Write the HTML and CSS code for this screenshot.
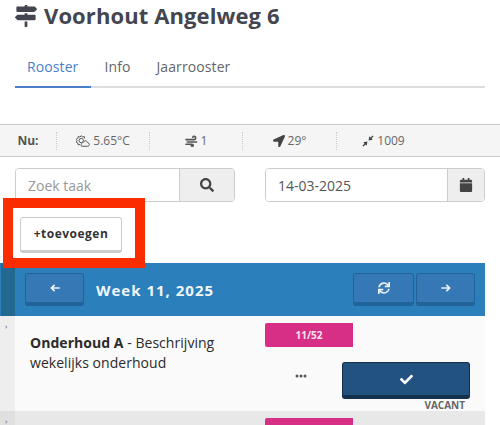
FILE: index.html
```html
<!DOCTYPE html>
<html lang="en">

<head>
    <meta charset="UTF-8">
    <title>Voorhout Angelweg 6</title>
    <link rel="stylesheet" href="styles.css">
</head>

<body>
    <h1 class="title">
        <svg class="title-icon" viewBox="0 0 512 512"><path d="M507.31 84.69L464 41.37c-6-6-14.14-9.37-22.63-9.37H288V16c0-8.84-7.16-16-16-16h-32c-8.84 0-16 7.16-16 16v16H56c-13.25 0-24 10.75-24 24v80c0 13.25 10.75 24 24 24h385.37c8.49 0 16.62-3.37 22.63-9.37l43.31-43.31c6.25-6.26 6.25-16.38 0-22.63zM224 496c0 8.84 7.16 16 16 16h32c8.84 0 16-7.16 16-16V384h-64v112zm232-272H288v-32h-64v32H70.63c-8.49 0-16.62 3.37-22.63 9.37L4.69 276.69c-6.25 6.25-6.25 16.38 0 22.63L48 342.63c6 6 14.14 9.37 22.63 9.37H456c13.25 0 24-10.75 24-24v-80c0-13.25-10.75-24-24-24z"/></svg>
        Voorhout Angelweg 6
    </h1>

    <div class="tabs">
        <a class="tab active">Rooster</a>
        <a class="tab">Info</a>
        <a class="tab">Jaarrooster</a>
    </div>

    <!-- Weather -->
    <div class="weather">
        <div class="weather-item weather-label">Nu:</div>
        <div class="weather-item weather-temp">
            <svg class="w-icon" viewBox="0 0 16 14" fill="none" stroke="#555" stroke-width="1.1"><circle cx="6" cy="6.500" r="2.500"/><path d="M6 .8l1.400 1.700 2.100-.6.400 2.200M6 .8L4.600 2.500 2.500 1.900l-.4 2.200-2 1 1.200 1.600L.1 8.300l2 1 .4 2.200 2.100-.6"/><path d="M6.500 13h6.500c3 0 3-3.800.4-4C13 6.500 9.500 5.800 8.500 8.500 6 8.500 5 13 6.500 13z" fill="#f5f5f5"/></svg>
            5.65°C
        </div>
        <div class="weather-item weather-wind">
            <svg class="w-icon wind-icon" viewBox="0 0 14 12" fill="none" stroke="#555" stroke-width="1.700" stroke-linecap="round"><path d="M1 4.500h8.500c2.700 0 2.500-3.500.3-3.500-.9 0-1.300.5-1.500 1"/><path d="M2.500 7h10"/><path d="M1 9.500h6.500c1.800 0 1.800 2 .2 2-.5 0-.8-.2-1-.6"/></svg>
            1
        </div>
        <div class="weather-item weather-dir">
            <svg class="w-icon dir-icon" viewBox="0 0 512 512" fill="#444"><path d="M444.52 3.52L28.74 195.42c-47.97 22.39-31.98 92.75 19.19 92.75h175.91v175.91c0 51.17 70.36 67.17 92.75 19.19l191.9-415.78c15.99-38.39-25.59-79.97-63.97-63.97z"/></svg>
            29°
        </div>
        <div class="weather-item weather-press">
            <svg class="w-icon press-icon" viewBox="0 0 14 14" fill="#444"><path d="M7.700 6.300L8.500 1.500l1.400 1.400 2.500-2.400 1.100 1.100-2.400 2.500 1.400 1.400z"/><path d="M6.300 7.700L5.500 12.500l-1.400-1.400-2.500 2.400-1.100-1.100 2.400-2.500L1.500 8.500z"/></svg>
            1009
        </div>
    </div>

    <!-- Search + date -->
    <div class="filters">
        <div class="input-group">
            <input class="field" type="text" placeholder="Zoek taak">
            <span class="addon addon-search"><svg class="addon-icon" viewBox="0 0 512 512"><path d="M505 442.7L405.3 343c-4.500-4.500-10.600-7-17-7H372c27.600-35.300 44-79.700 44-128C416 93.100 322.900 0 208 0S0 93.100 0 208s93.100 208 208 208c48.300 0 92.700-16.400 128-44v16.300c0 6.400 2.500 12.500 7 17l99.700 99.700c9.400 9.400 24.600 9.400 33.900 0l28.300-28.300c9.400-9.400 9.400-24.600.1-34zM208 336c-70.700 0-128-57.200-128-128 0-70.700 57.200-128 128-128 70.700 0 128 57.200 128 128 0 70.700-57.200 128-128 128z"/></svg></span>
        </div>
        <div class="input-group">
            <input class="field field-date" type="text" value="14-03-2025">
            <span class="addon addon-date"><svg class="addon-icon" viewBox="0 0 448 512"><path d="M12 192h424c6.600 0 12 5.400 12 12v260c0 26.500-21.500 48-48 48H48c-26.500 0-48-21.500-48-48V204c0-6.600 5.400-12 12-12zm436-44v-36c0-26.500-21.500-48-48-48h-48V12c0-6.600-5.400-12-12-12h-40c-6.600 0-12 5.400-12 12v52H160V12c0-6.600-5.400-12-12-12h-40c-6.600 0-12 5.400-12 12v52H48C21.500 64 0 85.500 0 112v36c0 6.600 5.400 12 12 12h424c6.600 0 12-5.400 12-12z"/></svg></span>
        </div>
    </div>

    <div class="add-row">
        <button class="add-btn">+toevoegen</button>
        <div class="highlight"></div>
    </div>

    <!-- Week header -->
    <div class="week-bar">
        <div class="week-stripe"></div>
        <button class="nav-btn nav-prev"><svg class="nav-icon" viewBox="0 0 14 12"><path d="M6.500 1.500L2 6l4.500 4.500M3 6h10.500"/></svg></button>
        <span class="week-title">Week 11, 2025</span>
        <div class="week-actions">
            <button class="nav-btn nav-sync"><svg class="nav-icon sync-icon" viewBox="0 0 512 512"><path d="M440.650 12.570l4 82.770A247.160 247.160 0 0 0 255.830 8C134.730 8 33.910 94.920 12.290 209.820A12 12 0 0 0 24.090 224h49.050a12 12 0 0 0 11.670-9.260 175.910 175.910 0 0 1 317-56.940l-101.460-4.860a12 12 0 0 0-12.570 12v47.410a12 12 0 0 0 12 12H500a12 12 0 0 0 12-12V12a12 12 0 0 0-12-12h-47.370a12 12 0 0 0-11.980 12.570zM255.830 432a175.610 175.610 0 0 1-146-77.800l101.800 4.870a12 12 0 0 0 12.570-12v-47.400a12 12 0 0 0-12-12H12a12 12 0 0 0-12 12V500a12 12 0 0 0 12 12h47.350a12 12 0 0 0 12-12.600l-4.150-82.570A247.170 247.170 0 0 0 255.830 504c121.110 0 221.930-86.920 243.550-201.820a12 12 0 0 0-11.800-14.180h-49.050a12 12 0 0 0-11.670 9.260A175.860 175.860 0 0 1 255.830 432z"/></svg></button>
            <button class="nav-btn nav-next"><svg class="nav-icon" viewBox="0 0 14 12"><path d="M7.500 1.500L12 6l-4.500 4.500M.5 6H11"/></svg></button>
        </div>
    </div>

    <!-- Tasks -->
    <div class="task">
        <div class="task-side"><span class="side-mark">›</span></div>
        <div class="task-text"><b>Onderhoud A</b> - Beschrijving wekelijks onderhoud</div>
        <div class="task-right">
            <div class="badge">11/52</div>
            <div class="task-actions">
                <svg class="dots" viewBox="0 0 12 4"><circle cx="2" cy="2" r="1.500"/><circle cx="6" cy="2" r="1.500"/><circle cx="10" cy="2" r="1.500"/></svg>
                <button class="check-btn"><svg class="check-icon" viewBox="0 0 512 512"><path d="M173.898 439.404l-166.400-166.400c-9.997-9.997-9.997-26.206 0-36.204l36.203-36.204c9.997-10.998 26.207-9.998 36.204 0L192 312.690 432.095 72.596c9.997-9.997 26.207-9.997 36.204 0l36.203 36.204c9.997 9.997 9.997 26.206 0 36.204l-294.400 294.401c-9.998 9.997-26.207 9.997-36.204-.001z"/></svg></button>
            </div>
            <div class="vacant">VACANT</div>
        </div>
    </div>
    <div class="task task-alt">
        <div class="task-side"><span class="side-mark">›</span></div>
        <div class="task-text"></div>
        <div class="task-right">
            <div class="badge"></div>
        </div>
    </div>
</body>

</html>
```

FILE: styles.css
```css
html,
body {
    margin: 0;
    padding: 0;
    height: 425px;
    overflow: hidden;
}

body {
    font-family: 'Open Sans', sans-serif;
    background: #fff;
    color: #333;
}

.title {
    margin: 0;
    padding: 0 15px;
    height: 30px;
    display: flex;
    align-items: center;
    gap: 7px;
    font-size: 22px;
    font-weight: 700;
    letter-spacing: 0.1px;
    line-height: 26px;
    color: #43454f;
}

.title-icon {
    width: 22px;
    height: 22px;
    margin-top: 2px;
    fill: #43454f;
}

/* Tabs */
.tabs {
    margin: 15px 15px 0;
    height: 41px;
    display: flex;
    border-bottom: 2px solid #ddd;
}

.tab {
    padding: 11px 13px 0 12px;
    margin-right: 1px;
    font-size: 14px;
    letter-spacing: 0.1px;
    line-height: 22px;
    color: #666;
    margin-bottom: -2px;
    border-bottom: 2px solid transparent;
}

.active {
    color: #4a7fc9;
    border-bottom-color: #4a7fc9;
}

/* Weather */
.weather {
    margin-top: 36px;
    height: 31px;
    display: flex;
    align-items: center;
    background: #f5f5f5;
    border-top: 1px solid #ccc;
    border-bottom: 1px solid #ccc;
    font-size: 12px;
    color: #666;
}

.weather-item {
    height: 18px;
    display: flex;
    align-items: center;
    justify-content: center;
    gap: 3px;
    border-right: 1px dotted #ccc;
}

.weather-label {
    width: 56px;
    font-weight: 700;
    color: #555;
}

.weather-temp {
    width: 92px;
}

.weather-wind {
    width: 92px;
}

.weather-dir {
    width: 93px;
}

.weather-press {
    width: 93px;
    border-right: none;
}

.w-icon {
    width: 14px;
    height: 14px;
}

.wind-icon {
    width: 13px;
    height: 12px;
}

.dir-icon {
    width: 12px;
    height: 12px;
}

.press-icon {
    width: 12px;
    height: 12px;
}

/* Filters */
.filters {
    margin-top: 11px;
    padding: 0 15px;
    display: grid;
    grid-template-columns: 220px 220px;
    justify-content: space-between;
}

.input-group {
    display: flex;
    height: 34px;
    border: 1px solid #ccc;
    border-radius: 4px;
    box-sizing: border-box;
    overflow: hidden;
}

.field {
    flex: 1;
    min-width: 0;
    border: none;
    outline: none;
    padding: 0 12px;
    font-family: inherit;
    font-size: 14px;
    color: #555;
    background: #fff;
}

.field::placeholder {
    color: #999;
    opacity: 1;
}

.addon {
    display: flex;
    align-items: center;
    justify-content: center;
    background: #eee;
    border-left: 1px solid #ccc;
}

.addon-search {
    width: 54px;
}

.addon-date {
    width: 36px;
}

.addon-icon {
    width: 14px;
    height: 14px;
    fill: #444;
}

/* Add button */
.add-row {
    position: relative;
    height: 61px;
    padding: 15px 0 0 20px;
    box-sizing: border-box;
}

.add-btn {
    display: block;
    width: 102px;
    height: 36px;
    padding: 0 0 1px;
    background: #fff;
    border: 1px solid #ccc;
    border-bottom: 3px solid #ccc;
    border-radius: 3px;
    font-family: inherit;
    font-size: 12px;
    font-weight: 700;
    letter-spacing: 0.5px;
    color: #333;
}

.highlight {
    position: absolute;
    left: 3px;
    top: -4px;
    z-index: 1;
    width: 142px;
    height: 70px;
    box-sizing: border-box;
    border: 10px solid #fb2c00;
}

/* Week bar */
.week-bar {
    width: 485px;
    height: 53px;
    padding-left: 25px;
    box-sizing: border-box;
    display: flex;
    align-items: center;
    gap: 12px;
    position: relative;
    background: #2b7fba;
}

.week-stripe {
    position: absolute;
    left: 1px;
    top: 0;
    bottom: 0;
    width: 14px;
    background: #22688f;
}

.week-title {
    font-size: 15px;
    font-weight: 700;
    letter-spacing: 1px;
    color: #f1f6fa;
}

.week-actions {
    margin-left: auto;
    margin-right: 10px;
    display: flex;
    gap: 2px;
}

.nav-btn {
    height: 33px;
    padding: 0;
    display: flex;
    align-items: center;
    justify-content: center;
    background: #3677b6;
    border: 1px solid #22649a;
    border-bottom: 4px solid #22649a;
    border-radius: 3px;
    box-sizing: border-box;
}

.nav-prev,
.nav-next {
    width: 59px;
}

.nav-sync {
    width: 61px;
}

.nav-icon {
    width: 10px;
    height: 10px;
    fill: none;
    stroke: #eef3f8;
    stroke-width: 2.4;
}

.sync-icon {
    width: 12px;
    height: 12px;
    fill: #eef3f8;
    stroke: none;
}

/* Tasks */
.task {
    width: 485px;
    height: 95px;
    display: flex;
    background: #fafafa;
}

.task-alt {
    height: 14px;
    overflow: hidden;
    background: #e8e8e8;
}

.task-side {
    width: 15px;
    background: #eee;
    font-size: 8px;
    line-height: 8px;
    color: #555;
    padding: 6px 0 0 5px;
    box-sizing: border-box;
}

.task-alt .task-side {
    background: #e0e0e0;
}

.task-text {
    width: 235px;
    padding: 17px 0 0 15px;
    box-sizing: border-box;
    font-size: 14px;
    letter-spacing: 0.04px;
    line-height: 20px;
    color: #2b2b2b;
}

.task-right {
    flex: 1;
    padding: 7px 0 0 15px;
}

.badge {
    width: 88px;
    height: 24px;
    background: #d62f85;
    border-radius: 2px 0 0 2px;
    color: #f8e4ef;
    font-size: 10px;
    font-weight: 700;
    line-height: 24px;
    text-align: center;
}

.task-actions {
    margin-top: 15px;
    display: flex;
    align-items: flex-start;
}

.dots {
    width: 12px;
    height: 4px;
    margin: 12px 35px 0 30px;
    fill: #555;
}

.check-btn {
    width: 128px;
    height: 37px;
    padding: 0;
    background: #22527f;
    border: 1px solid #13314f;
    border-bottom: 4px solid #13314f;
    border-radius: 3px;
    display: flex;
    align-items: center;
    justify-content: center;
}

.check-icon {
    width: 13px;
    height: 13px;
    fill: #fff;
}

.vacant {
    width: 200px;
    text-align: right;
    font-size: 10px;
    font-weight: 700;
    line-height: 12px;
    color: #666;
}
```
